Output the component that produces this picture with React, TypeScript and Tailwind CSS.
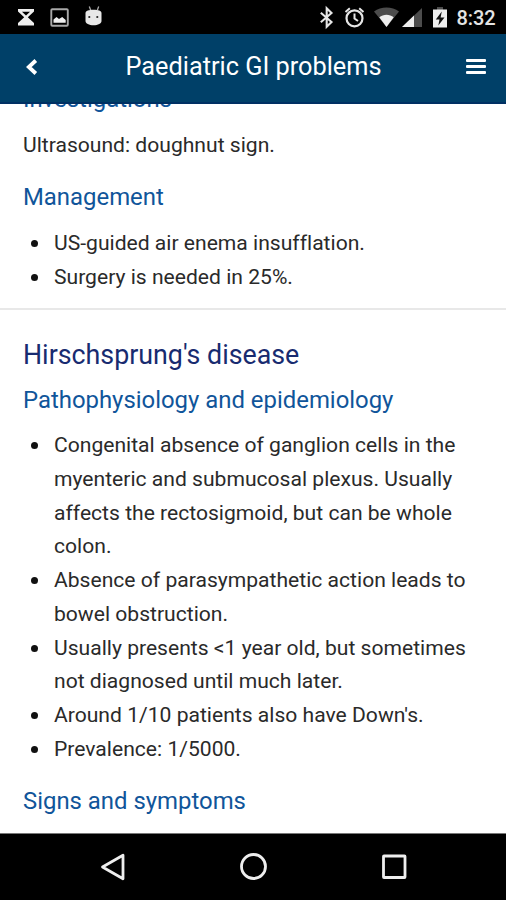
import type { ReactNode } from "react";

const MANAGEMENT = ["US-guided air enema insufflation.", "Surgery is needed in 25%."];

const PATHOPHYSIOLOGY = [
  "Congenital absence of ganglion cells in the myenteric and submucosal plexus. Usually affects the rectosigmoid, but can be whole colon.",
  "Absence of parasympathetic action leads to bowel obstruction.",
  "Usually presents <1 year old, but sometimes not diagnosed until much later.",
  "Around 1/10 patients also have Down's.",
  "Prevalence: 1/5000.",
];

function StatusBar() {
  return (
    <div className="flex h-[34px] shrink-0 items-center bg-black text-[#eeeeee]">
      <svg width="506" height="34" viewBox="0 0 506 34" fill="none">
        {/* hourglass */}
        <path d="M18 9h16v2.500L27.800 17.300l6.200 5.700v2.500H18V23l6.200-5.700L18 11.500z" fill="#eee" />
        <path d="M22 11.800h8L26 15.600z" fill="#000" />
        {/* screenshot */}
        <rect x="51.300" y="9.300" width="16.500" height="16.500" rx="1" stroke="#a8a8a8" strokeWidth="1.900" />
        <path d="M53.500 22.800v-3.200l3-2.500 2.500 2 3.200-2.200 3.500 3v2.900z" fill="#eee" />
        {/* android head */}
        <path d="M89.300 6.500l1.500 4M98.700 6.500l-1.500 4" stroke="#aaa" strokeWidth="1.300" />
        <path d="M85.500 13c0-2 3.500-3.200 8-3.200s8 1.200 8 3.200v8c0 2.500-3.500 4.300-8 4.300s-8-1.800-8-4.300z" fill="#e8e8e8" />
        <circle cx="89.300" cy="17" r="1.100" fill="#222" />
        <circle cx="97.300" cy="17" r="1.100" fill="#222" />
        {/* bluetooth */}
        <path d="M320.800 12.800l10.700 9.200-4.800 4.700V8.300l4.800 4.700-10.700 9.200" stroke="#e6e6e6" strokeWidth="2.100" />
        {/* alarm */}
        <circle cx="354.500" cy="18.300" r="8" stroke="#e6e6e6" strokeWidth="2.200" />
        <path d="M354.500 13.500v5l3.500 2.500M345.500 12l4.300-3.700M363.500 12l-4.300-3.700" stroke="#e6e6e6" strokeWidth="2" />
        {/* wifi */}
        <path d="M374 11.500c7-5.500 18-5.500 25 0L386.500 27z" fill="#4c4c4c" />
        <path d="M379.300 17.300c4-3.400 10.400-3.400 14.400 0L386.500 27z" fill="#eee" />
        {/* signal */}
        <path d="M402 27L422 8v19z" fill="#4c4c4c" />
        <path d="M402 27l12-11.500V27z" fill="#eee" />
        {/* battery */}
        <path d="M437 7h6v3h-6z" fill="#4c4c4c" />
        <rect x="433" y="9.500" width="14" height="18" fill="#eee" />
        <path d="M441.800 11.500l-6 8h3.700l-1.200 6 6.200-8h-3.900z" fill="#111" />
        <text x="456.500" y="25" fill="#e4e4e4" fontSize="20" fontWeight="500" fontFamily="Roboto, sans-serif" textLength="39">
          8:32
        </text>
      </svg>
    </div>
  );
}

function AppHeader() {
  return (
    <header className="flex h-[70px] shrink-0 items-center justify-between border-b-2 border-[#003063] bg-[#004068] pr-5 pl-[25px] text-white">
      <button type="button" aria-label="Back">
        <svg width="14" height="18" viewBox="0 0 14 18" fill="none">
          <path d="M10.800 1.500L3.800 8 10.800 14.500" stroke="#fff" strokeWidth="3.800" />
        </svg>
      </button>
      <h1 className="-mr-0.5 mb-0.5 text-[25.300px] leading-none whitespace-nowrap">Paediatric GI problems</h1>
      <button type="button" aria-label="Menu" className="mb-[3px] flex w-5 flex-col gap-[3px]">
        <span className="h-[3px] rounded-[1px] bg-white" />
        <span className="h-[3px] rounded-[1px] bg-white" />
        <span className="h-[3px] rounded-[1px] bg-white" />
      </button>
    </header>
  );
}

function SubHeading({ children }: { children: ReactNode }) {
  return <h3 className="h-[34px] text-[23.900px] leading-[34px] whitespace-nowrap text-[#10559a]">{children}</h3>;
}

function BulletList({ items }: { items: string[] }) {
  return (
    <ul className="text-[21.100px] leading-[33.750px] text-[#2a2a2a]">
      {items.map((item) => (
        <li key={item} className="flex">
          <span className="mt-[14px] mr-4 ml-2 size-[7px] shrink-0 rounded-full bg-[#111111]" />
          <span>{item}</span>
        </li>
      ))}
    </ul>
  );
}

function NavBar() {
  return (
    <nav className="flex h-[67px] shrink-0 items-center justify-between border-t border-[#777777] bg-black px-[99px]">
      <svg width="28" height="30" viewBox="0 0 28 30" fill="none">
        <path d="M24 3.200v23.600L3.500 15z" stroke="#eee" strokeWidth="2.800" strokeLinejoin="round" />
      </svg>
      <svg width="30" height="30" viewBox="0 0 30 30" fill="none">
        <circle cx="15.500" cy="14.500" r="12" stroke="#eee" strokeWidth="2.800" />
      </svg>
      <svg width="28" height="30" viewBox="0 0 28 30" fill="none">
        <rect x="4.500" y="4" width="21.500" height="21.500" rx="0.500" stroke="#eee" strokeWidth="2.800" />
      </svg>
    </nav>
  );
}

export default function App() {
  return (
    <div className="flex h-[900px] w-[506px] flex-col overflow-hidden bg-white font-['Roboto',sans-serif] [font-variant-ligatures:none]">
      <StatusBar />
      <AppHeader />
      <main className="min-h-0 flex-1 overflow-hidden">
        <section className="-mt-[22px] h-[228px] border-b-2 border-[#e8e8e8] px-[23px]">
          <SubHeading>Investigations</SubHeading>
          <p className="mt-3 text-[21.100px] leading-[34px] text-[#2a2a2a]">Ultrasound: doughnut sign.</p>
          <div className="mt-[18px] mb-3">
            <SubHeading>Management</SubHeading>
          </div>
          <BulletList items={MANAGEMENT} />
        </section>
        <section className="px-[23px] pt-7">
          <h2 className="h-[34px] text-[26.800px] leading-[34px] whitespace-nowrap text-[#182b70]">Hirschsprung's disease</h2>
          <div className="mt-[11px] mb-[11px]">
            <SubHeading>Pathophysiology and epidemiology</SubHeading>
          </div>
          <BulletList items={PATHOPHYSIOLOGY} />
          <div className="mt-[18px]">
            <SubHeading>Signs and symptoms</SubHeading>
          </div>
        </section>
      </main>
      <NavBar />
    </div>
  );
}
